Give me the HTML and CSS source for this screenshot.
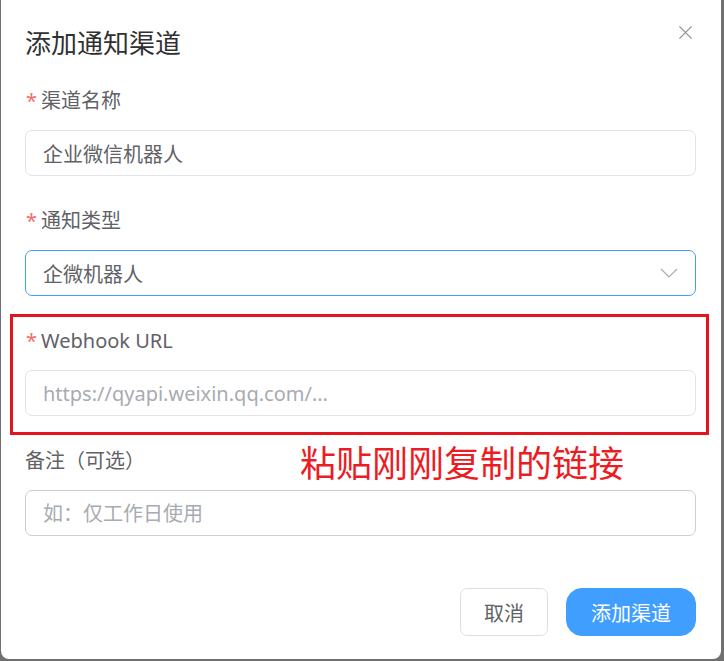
FILE: index.html
```html
<!DOCTYPE html>
<html lang="zh-CN">
<head>
    <meta charset="UTF-8">
    <meta name="viewport" content="width=device-width, initial-scale=1.0">
    <title>添加通知渠道</title>
    <link rel="stylesheet" href="styles.css">
</head>
<body>
    <div class="dialog">
        <div class="dialog-header">
            <h2 class="dialog-title">添加通知渠道</h2>
            <button class="dialog-close" type="button" aria-label="关闭">
                <svg width="16" height="16" viewBox="0 0 16 16">
                    <path d="M1.5 1.5 L14.5 14.5 M14.5 1.5 L1.5 14.5" stroke="#909399" stroke-width="1.4" fill="none"/>
                </svg>
            </button>
        </div>

        <form class="dialog-body">
            <div class="form-item">
                <label class="form-label required">渠道名称</label>
                <div class="input-wrap">
                    <input class="input" type="text" value="企业微信机器人">
                </div>
            </div>

            <div class="form-item">
                <label class="form-label required">通知类型</label>
                <div class="input-wrap is-focus">
                    <span class="select-value">企微机器人</span>
                    <svg class="select-arrow" width="18" height="10" viewBox="0 0 18 10">
                        <path d="M1 1 L9 9 L17 1" stroke="#a8abb2" stroke-width="1.2" fill="none"/>
                    </svg>
                </div>
            </div>

            <div class="form-item has-callout">
                <label class="form-label required">Webhook URL</label>
                <div class="input-wrap">
                    <input class="input" type="text" placeholder="https://qyapi.weixin.qq.com/...">
                </div>
                <!-- red annotation drawn over the field -->
                <div class="callout-box"></div>
                <div class="callout-text">粘贴刚刚复制的链接</div>
            </div>

            <div class="form-item">
                <label class="form-label">备注（可选）</label>
                <div class="input-wrap is-hover">
                    <input class="input" type="text" placeholder="如：仅工作日使用">
                </div>
            </div>
        </form>

        <div class="dialog-footer">
            <button class="btn" type="button">取消</button>
            <button class="btn btn-primary" type="button">添加渠道</button>
        </div>
    </div>
</body>
</html>
```

FILE: styles.css
```css
body {
    margin: 0;
    padding: 0;
    background-color: #707070;
    font-family: "Noto Sans", "Noto Sans CJK SC", sans-serif;
}
.dialog {
    position: relative;
    height: 659px;
    margin: 0 3px 0 1px;
    background-color: #fff;
    border-radius: 0 0 8px 8px;
    display: flex;
    flex-direction: column;
}
.dialog-header {
    display: flex;
    justify-content: space-between;
    align-items: flex-start;
    padding: 26px 28px 0 24px;
}
.dialog-title {
    margin: 0;
    font-size: 26px;
    line-height: 34px;
    font-weight: 400;
    color: #303133;
}
.dialog-close {
    border: none;
    background: none;
    padding: 0;
    margin-top: -1px;
    width: 15px;
    height: 15px;
    cursor: pointer;
}
.dialog-close svg {
    display: block;
    width: 15px;
    height: 15px;
}
.dialog-body {
    padding: 24px 25px 0 24px;
}
.form-item {
    position: relative;
    margin-bottom: 28px;
}
.form-label {
    display: block;
    height: 34px;
    line-height: 34px;
    margin-bottom: 12px;
    font-size: 20px;
    color: #606266;
}
.form-label.required::before {
    content: "*";
    color: #f56c6c;
    margin: 0 4px 0 1px;
}
.input-wrap {
    display: flex;
    align-items: center;
    height: 46px;
    box-sizing: border-box;
    padding: 0 17px;
    border: 1.5px solid #e1e3e9;
    border-radius: 7px;
    background-color: #fff;
}
.input-wrap.is-focus {
    border-color: #409eff;
}
.input-wrap.is-hover {
    border-color: #cbced4;
}
.input {
    flex: 1;
    border: none;
    outline: none;
    padding: 0;
    background: transparent;
    font-family: inherit;
    font-size: 20px;
    color: #606266;
}
.input::placeholder {
    color: #a8abb2;
}
.select-value {
    flex: 1;
    font-size: 20px;
    color: #606266;
}
.callout-box {
    position: absolute;
    top: -10px;
    left: -15px;
    right: -13px;
    height: 121px;
    box-sizing: border-box;
    border: 3px solid #e3141e;
}
.callout-text {
    position: absolute;
    top: 117px;
    left: 275px;
    font-size: 36px;
    line-height: 46px;
    color: #ec1c24;
    white-space: nowrap;
}
.dialog-footer {
    display: flex;
    justify-content: flex-end;
    gap: 18px;
    padding: 24px 25px 0 24px;
}
.btn {
    height: 48px;
    padding: 0 23px;
    border: 1.5px solid #dcdfe6;
    border-radius: 7px;
    background-color: #fff;
    font-family: inherit;
    font-size: 20px;
    color: #606266;
    cursor: pointer;
}
.btn-primary {
    padding: 0 24px;
    border-color: #409eff;
    border-radius: 16px;
    background-color: #409eff;
    color: #fff;
}
```
